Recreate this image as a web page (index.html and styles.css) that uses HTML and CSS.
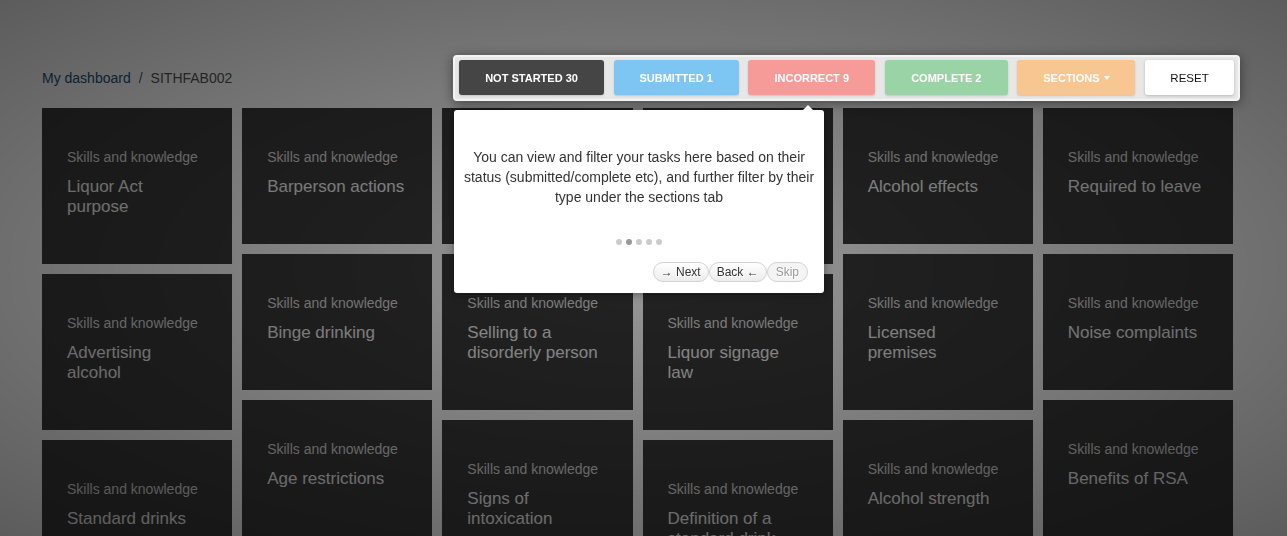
FILE: index.html
```html
<!DOCTYPE html>
<html lang="en">
<head>
<meta charset="utf-8">
<title>SITHFAB002</title>
<link rel="stylesheet" href="styles.css">
</head>
<body>
<div class="page">
  <header class="topbar">
    <nav class="crumbs">
      <a class="crumb-link" href="#">My dashboard</a>
      <span class="crumb-sep">/</span>
      <span class="crumb-current">SITHFAB002</span>
    </nav>
    <div class="filters">
      <button class="fbtn fbtn-dark">NOT STARTED 30</button>
      <button class="fbtn fbtn-blue">SUBMITTED 1</button>
      <button class="fbtn fbtn-red">INCORRECT 9</button>
      <button class="fbtn fbtn-green">COMPLETE 2</button>
      <button class="fbtn fbtn-orange">SECTIONS <span class="caret"></span></button>
      <button class="fbtn fbtn-reset">RESET</button>

      <div class="tour">
        <span class="tour-arrow"></span>
        <p class="tour-text">You can view and filter your tasks here based on their<br>status (submitted/complete etc), and further filter by their<br>type under the sections tab</p>
        <div class="tour-bullets">
          <span class="dot"></span><span class="dot dot-active"></span><span class="dot"></span><span class="dot"></span><span class="dot"></span>
        </div>
        <div class="tour-actions">
          <button class="tbtn">&#8594; Next</button><button class="tbtn">Back &#8592;</button><button class="tbtn tbtn-disabled">Skip</button>
        </div>
      </div>
    </div>
  </header>

  <main class="board">
    <div class="col">
      <div class="tile"><div class="tile-label">Skills and knowledge</div><div class="tile-title">Liquor Act purpose</div></div>
      <div class="tile"><div class="tile-label">Skills and knowledge</div><div class="tile-title">Advertising alcohol</div></div>
      <div class="tile"><div class="tile-label">Skills and knowledge</div><div class="tile-title">Standard drinks</div></div>
    </div>
    <div class="col">
      <div class="tile"><div class="tile-label">Skills and knowledge</div><div class="tile-title">Barperson actions</div></div>
      <div class="tile"><div class="tile-label">Skills and knowledge</div><div class="tile-title">Binge drinking</div></div>
      <div class="tile"><div class="tile-label">Skills and knowledge</div><div class="tile-title">Age restrictions</div></div>
    </div>
    <div class="col">
      <div class="tile tile-short"></div>
      <div class="tile"><div class="tile-label">Skills and knowledge</div><div class="tile-title">Selling to a disorderly person</div></div>
      <div class="tile"><div class="tile-label">Skills and knowledge</div><div class="tile-title">Signs of intoxication</div></div>
    </div>
    <div class="col">
      <div class="tile tile-tall"></div>
      <div class="tile"><div class="tile-label">Skills and knowledge</div><div class="tile-title">Liquor signage law</div></div>
      <div class="tile"><div class="tile-label">Skills and knowledge</div><div class="tile-title">Definition of a standard drink</div></div>
    </div>
    <div class="col">
      <div class="tile"><div class="tile-label">Skills and knowledge</div><div class="tile-title">Alcohol effects</div></div>
      <div class="tile"><div class="tile-label">Skills and knowledge</div><div class="tile-title">Licensed premises</div></div>
      <div class="tile"><div class="tile-label">Skills and knowledge</div><div class="tile-title">Alcohol strength</div></div>
    </div>
    <div class="col">
      <div class="tile"><div class="tile-label">Skills and knowledge</div><div class="tile-title">Required to leave</div></div>
      <div class="tile"><div class="tile-label">Skills and knowledge</div><div class="tile-title">Noise complaints</div></div>
      <div class="tile"><div class="tile-label">Skills and knowledge</div><div class="tile-title">Benefits of RSA</div></div>
    </div>
  </main>
</div>
<div class="overlay"></div>
</body>
</html>
```

FILE: styles.css
```css
html, body {
  margin: 0;
  padding: 0;
  height: 100%;
  overflow: hidden;
}
body {
  background: #ffffff;
  font-family: "Liberation Sans", Arial, Helvetica, sans-serif;
  color: #333;
}
.page {
  padding: 60px 0 0 42px;
  width: 1191px;
}

/* header */
.topbar {
  display: flex;
  align-items: center;
  justify-content: space-between;
  height: 35px;
}
.crumbs {
  font-size: 14px;
  display: flex;
  gap: 8px;
  align-items: center;
}
.crumb-link {
  color: #23527c;
  text-decoration: none;
}
.crumb-sep, .crumb-current {
  color: #555;
}

.filters {
  position: relative;
  z-index: 20;
  display: flex;
  gap: 9.6px;
  margin-right: -1px;
}
.filters::before {
  content: "";
  position: absolute;
  left: -6px;
  right: -6px;
  top: -5px;
  bottom: -6px;
  background: #e7e7e7;
  border: 2px solid #f4f4f4;
  border-radius: 4px;
  box-shadow: 0 2px 12px rgba(0, 0, 0, 0.45);
  z-index: -1;
  box-sizing: border-box;
}
.fbtn {
  height: 35px;
  border: 0;
  border-radius: 3px;
  padding: 0;
  font-family: "Liberation Sans", Arial, sans-serif;
  font-size: 11px;
  font-weight: bold;
  color: #fff;
  white-space: nowrap;
  box-shadow: 0 1px 2px rgba(0, 0, 0, 0.15);
  display: flex;
  align-items: center;
  justify-content: center;
}
.fbtn-dark { background: #454545; width: 145px; }
.fbtn-blue { background: #7dc5f2; width: 125px; }
.fbtn-red { background: #f79b99; width: 127px; }
.fbtn-green { background: #99d3a6; width: 123px; }
.fbtn-orange { background: #f8c690; width: 118px; }
.fbtn-reset {
  background: #fff;
  color: #111;
  font-weight: normal;
  font-size: 11.5px;
  width: 89px;
  box-shadow: 0 1px 3px rgba(0, 0, 0, 0.2);
}
.caret {
  display: inline-block;
  margin-left: 4px;
  border-left: 3.5px solid transparent;
  border-right: 3.5px solid transparent;
  border-top: 4px solid #fff;
}

/* tour tooltip */
.tour {
  position: absolute;
  left: -5px;
  top: 50px;
  width: 370px;
  height: 183px;
  box-sizing: border-box;
  background: #fff;
  border-radius: 3px;
  box-shadow: 0 1px 10px rgba(0, 0, 0, 0.4);
  z-index: 30;
}
.tour-arrow {
  position: absolute;
  top: -10px;
  right: 11px;
  border: 5px solid transparent;
  border-bottom-color: #fff;
}
.tour-text {
  margin: 0;
  padding: 37px 0 0;
  font-size: 14px;
  line-height: 20px;
  color: #333;
  text-align: center;
  white-space: nowrap;
}
.tour-bullets {
  display: flex;
  justify-content: center;
  gap: 4px;
  margin-top: 32px;
  height: 6px;
}
.dot {
  width: 6px;
  height: 6px;
  border-radius: 50%;
  background: #ccc;
}
.dot-active {
  background: #999;
}
.tour-actions {
  display: flex;
  justify-content: flex-end;
  margin-top: 17px;
  padding-right: 16px;
}
.tbtn {
  height: 20px;
  padding: 0 7px;
  border: 1px solid #d3d3d3;
  border-radius: 10px;
  background: linear-gradient(#ffffff, #ececec);
  font-family: "Liberation Sans", Arial, sans-serif;
  font-size: 12px;
  color: #333;
  text-shadow: 1px 1px 0 #fff;
  line-height: 18px;
  margin: 0;
}
.tbtn-disabled {
  color: #9a9a9a;
  background: #f4f4f4;
  border-color: #d3d3d3;
  padding: 0 8px;
}

/* tiles */
.board {
  display: grid;
  grid-template-columns: repeat(6, 1fr);
  gap: 10px;
  margin-top: 13px;
}
.col {
  display: flex;
  flex-direction: column;
  gap: 10px;
}
.tile {
  background: #3b3b3b;
  padding: 39px 25px 47px;
}
.tile-short {
  height: 136px;
  padding: 0;
}
.tile-tall {
  height: 156px;
  padding: 0;
}
.tile-label {
  font-size: 14px;
  line-height: 20px;
  color: #dcdcdc;
  margin-bottom: 10px;
}
.tile-title {
  font-size: 17px;
  line-height: 20px;
  color: #f2f2f2;
  max-width: 140px;
}

/* overlay */
.overlay {
  position: fixed;
  inset: 0;
  z-index: 10;
  background: radial-gradient(ellipse farthest-corner at center, rgba(0, 0, 0, 0.4) 0%, rgba(0, 0, 0, 0.64) 100%);
}
```
